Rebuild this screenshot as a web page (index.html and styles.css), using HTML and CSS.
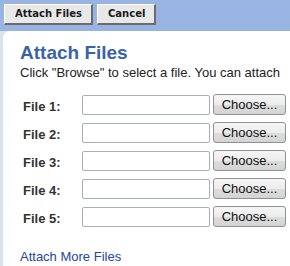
FILE: index.html
```html
<!DOCTYPE html>
<html>
<head>
<meta charset="utf-8">
<link rel="stylesheet" href="styles.css">
</head>
<body>
<div class="toolbar">
  <button class="tb-btn">Attach Files</button>
  <button class="tb-btn">Cancel</button>
</div>
<div class="frame">
  <div class="panel">
    <h1 class="title">Attach Files</h1>
    <p class="intro">Click "Browse" to select a file. You can attach</p>
    <div class="rows">
      <div class="row"><label class="lbl">File 1:</label><span class="field"></span><button class="choose">Choose...</button></div>
      <div class="row"><label class="lbl">File 2:</label><span class="field"></span><button class="choose">Choose...</button></div>
      <div class="row"><label class="lbl">File 3:</label><span class="field"></span><button class="choose">Choose...</button></div>
      <div class="row"><label class="lbl">File 4:</label><span class="field"></span><button class="choose">Choose...</button></div>
      <div class="row"><label class="lbl">File 5:</label><span class="field"></span><button class="choose">Choose...</button></div>
    </div>
    <a class="more" href="#">Attach More Files</a>
  </div>
</div>
</body>
</html>
```
FILE: styles.css
```css
html, body {
  margin: 0;
  padding: 0;
  height: 100%;
  overflow: hidden;
}
body {
  background: #dae2ee;
  font-family: "Liberation Sans", Arial, sans-serif;
}
.toolbar {
  background: #99b4e0;
  height: 31px;
  box-sizing: border-box;
  padding: 4px 4px 0;
  display: flex;
  gap: 4px;
  align-items: flex-start;
}
.tb-btn {
  font-family: "DejaVu Sans", Verdana, sans-serif;
  font-weight: bold;
  font-size: 10px;
  color: #1a1a1a;
  background: #e8e8e8;
  height: 21px;
  padding: 0 9px 0 10px;
  border-style: solid;
  border-width: 1px 2px 2px 1px;
  border-color: #ffffff #6b6b6b #6b6b6b #ffffff;
  border-radius: 0;
  margin: 0;
  line-height: 18px;
}
.frame {
  padding-left: 3px;
  height: calc(100% - 31px);
}
.panel {
  background: #ffffff;
  border-top-left-radius: 7px;
  height: 100%;
  box-sizing: border-box;
  padding: 11px 0 0 17px;
}
.title {
  margin: 0;
  font-size: 19px;
  line-height: 22px;
  font-weight: bold;
  color: #3a63aa;
}
.intro {
  margin: 1px 0 0;
  font-size: 13px;
  line-height: 15px;
  color: #222;
  white-space: nowrap;
}
.rows {
  margin-top: 14px;
  display: flex;
  flex-direction: column;
  gap: 7px;
}
.row {
  display: flex;
  align-items: center;
  height: 21px;
}
.lbl {
  width: 62px;
  padding-left: 3px;
  box-sizing: border-box;
  margin-top: 4px;
  font-size: 13px;
  line-height: 15px;
  font-weight: bold;
  color: #333;
}
.field {
  width: 128px;
  height: 20px;
  margin-top: 1px;
  box-sizing: border-box;
  border: 1px solid #a9adb5;
  border-radius: 2px;
  background: #fff;
}
.choose {
  margin: 0 0 0 3px;
  width: 73px;
  height: 21px;
  padding: 0;
  box-sizing: border-box;
  border: 1px solid #8f9092;
  border-radius: 3px;
  background: linear-gradient(#f6f6f6 0%, #ececec 50%, #dddddd 51%, #d4d4d4 100%);
  font-family: "Liberation Sans", Arial, sans-serif;
  font-size: 13px;
  color: #111;
  line-height: 19px;
}
.more {
  display: block;
  margin-top: 22px;
  font-size: 13px;
  line-height: 15px;
  color: #2545a3;
  text-decoration: none;
}
```
